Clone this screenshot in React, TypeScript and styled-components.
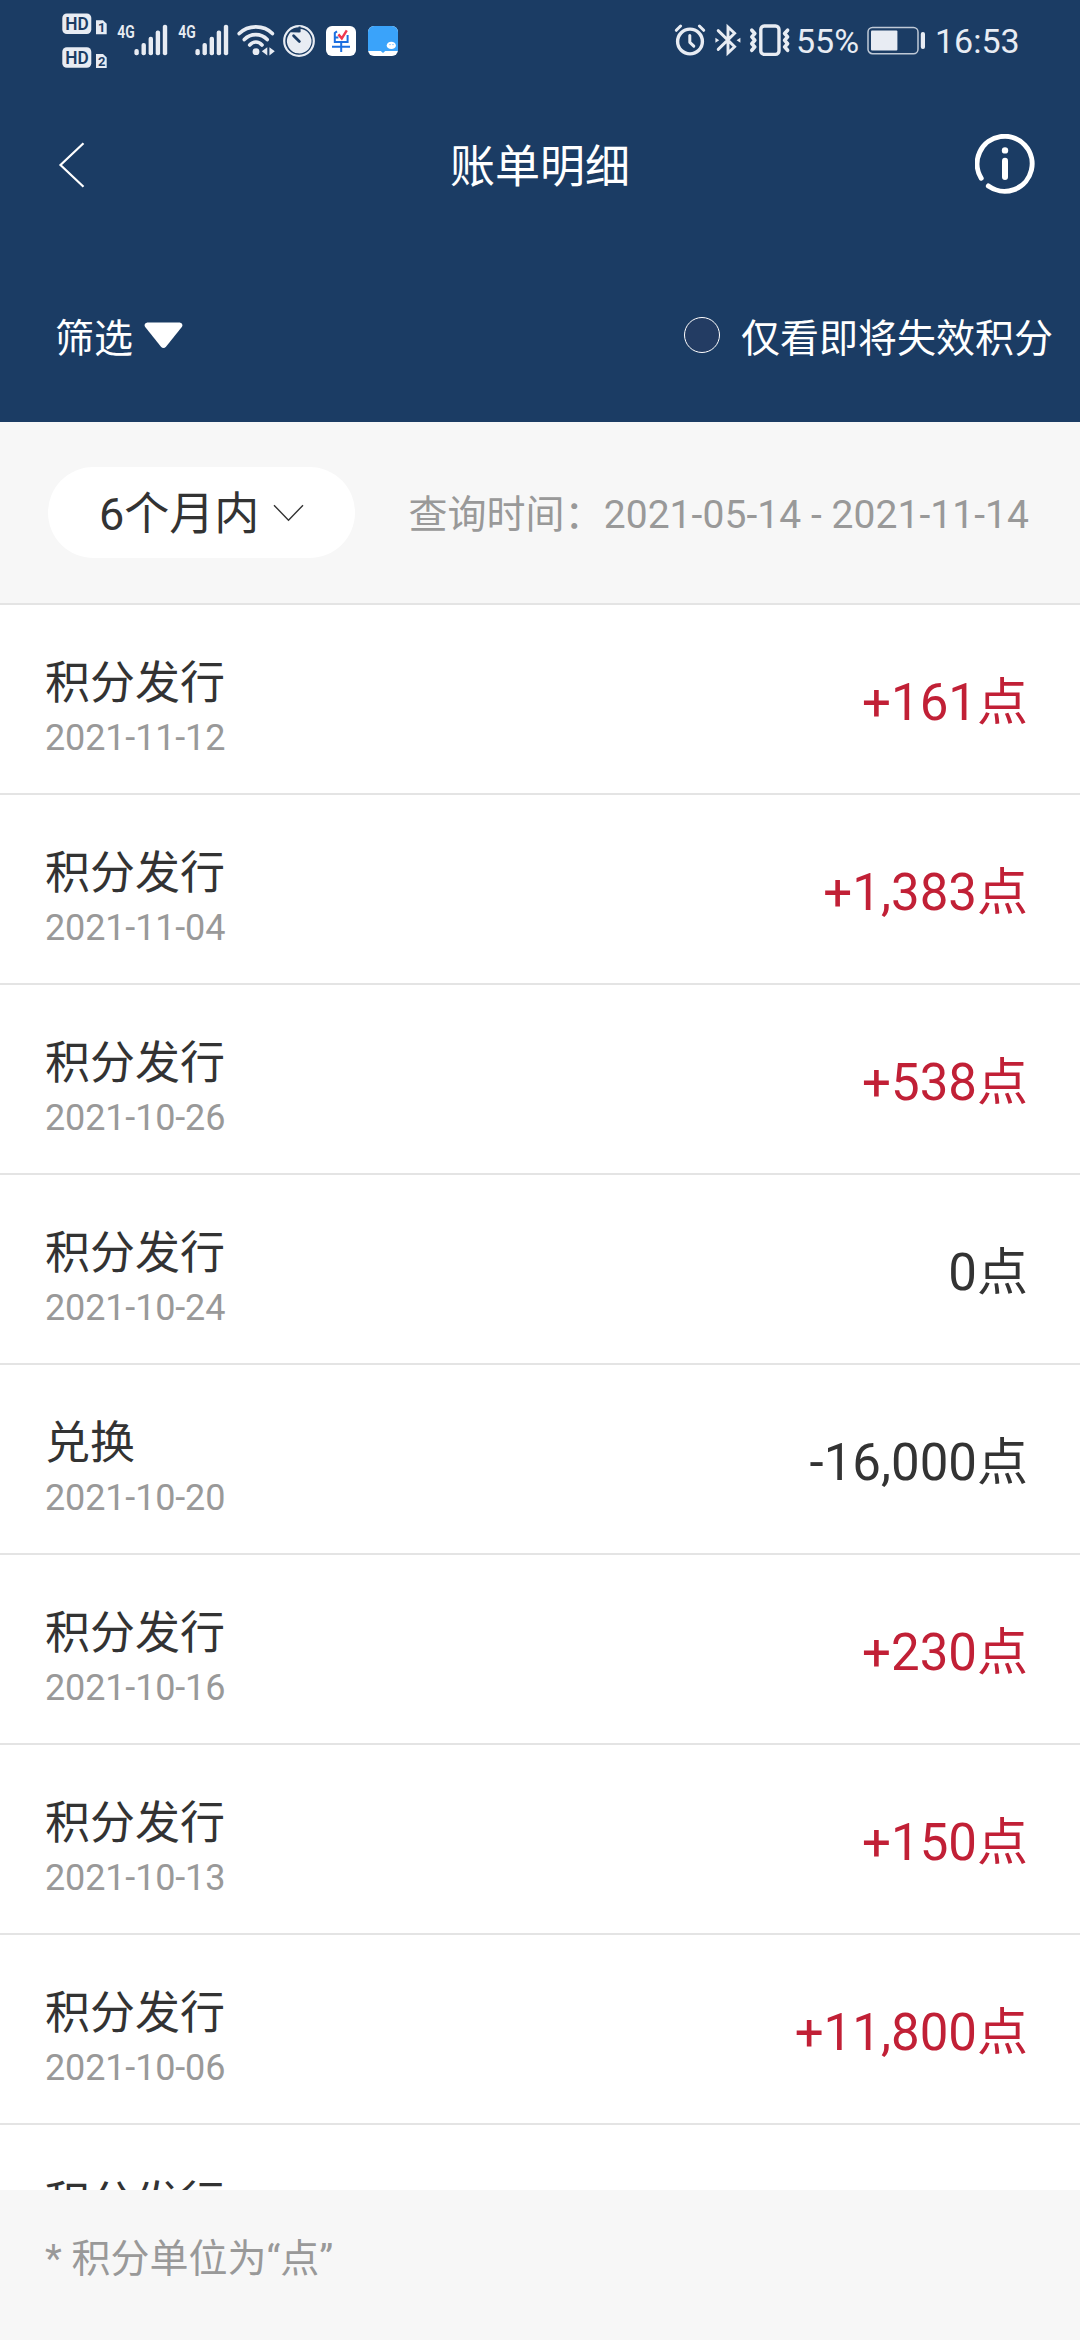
import React from 'react';
import styled, { createGlobalStyle } from 'styled-components';

const NAVY = '#1b3c64';
const STATUS = '#e8ecf3';

const GlobalStyle = createGlobalStyle`
  *, *::before, *::after { box-sizing: border-box; }
  html, body { margin: 0; padding: 0; background: #fff; }
  body { font-family: Roboto, "Noto Sans CJK SC", sans-serif; }
`;

const Screen = styled.div`
  width: 1080px;
  height: 2340px;
  display: flex;
  flex-direction: column;
  overflow: hidden;
  background: #fff;
  color: #333;
`;

const TopArea = styled.header`
  flex: none;
  height: 422px;
  background: ${NAVY};
  color: #fff;
`;

const StatusBar = styled.div`
  height: 82px;
  display: flex;
  justify-content: space-between;
  padding: 0 63px 0 62px;
`;

const StatusGroup = styled.div`
  display: flex;
  align-items: flex-start;
`;

const StatusIcon = styled.svg<{ $gap?: number }>`
  display: block;
  flex: none;
  margin-left: ${(p) => p.$gap ?? 0}px;
`;

const StatusText = styled.span<{ $gap?: number; $width: number }>`
  width: ${(p) => p.$width}px;
  margin-left: ${(p) => p.$gap ?? 0}px;
  font-size: 34px;
  line-height: 82px;
  white-space: nowrap;
  color: ${STATUS};
`;

const NavBar = styled.nav`
  height: 166px;
  display: grid;
  grid-template-columns: 180px 1fr 180px;
  align-items: center;
`;

const BackButton = styled.button`
  border: 0;
  padding: 0 0 0 58px;
  background: none;
  display: flex;
  color: inherit;
`;

const Title = styled.h1`
  margin: 0;
  padding-top: 6px;
  font-size: 45px;
  font-weight: 400;
  line-height: 66px;
  text-align: center;
`;

const InfoButton = styled.button`
  border: 0;
  padding: 0 45px 2px 0;
  background: none;
  display: flex;
  justify-content: flex-end;
  color: inherit;
`;

const FilterRow = styled.div`
  height: 174px;
  display: flex;
  justify-content: space-between;
  align-items: center;
  padding: 7px 27px 0 55px;
  font-size: 39px;
  line-height: 56px;
`;

const FilterToggle = styled.div`
  display: flex;
  align-items: center;
  gap: 11px;
  svg { margin-bottom: 7px; }
`;

const ExpiringOption = styled.label`
  display: flex;
  align-items: center;
  gap: 21px;
`;

const RadioCircle = styled.span`
  width: 36px;
  height: 36px;
  margin-bottom: 7px;
  border: 1.5px solid #fff;
  border-radius: 50%;
  background: #233c63;
`;

const PeriodBar = styled.section`
  flex: none;
  height: 183px;
  display: flex;
  justify-content: space-between;
  align-items: center;
  padding: 0 51px 0 48px;
  border-bottom: 2px solid #e4e4e4;
  background: #f7f7f7;
`;

const PeriodPill = styled.button`
  width: 307px;
  height: 91px;
  border: 0;
  border-radius: 46px;
  padding: 5px 0 0 51px;
  display: flex;
  align-items: center;
  gap: 14px;
  background: #fff;
  color: #333;
  font: inherit;
  font-size: 45px;
  line-height: 66px;
  svg { margin-bottom: 5px; }
`;

const QueryRange = styled.span`
  padding-top: 4px;
  font-size: 39px;
  line-height: 56px;
  letter-spacing: 0.06px;
  color: #999;
  white-space: nowrap;
`;

const RecordList = styled.main`
  flex: 1;
  min-height: 0;
  overflow: hidden;
`;

const Record = styled.div`
  height: 190px;
  display: flex;
  justify-content: space-between;
  align-items: center;
  padding: 8px 52px 0 45px;
  border-bottom: 2px solid #e4e4e4;
`;

const RecordInfo = styled.div`
  display: flex;
  flex-direction: column;
  padding-top: 10px;
`;

const RecordName = styled.span`
  font-size: 45px;
  line-height: 60px;
`;

const RecordDate = styled.span`
  font-size: 36px;
  line-height: 48px;
  letter-spacing: -0.15px;
  color: #999;
`;

const Amount = styled.span<{ $gain: boolean }>`
  font-size: 51px;
  line-height: 74px;
  color: ${(p) => (p.$gain ? '#c12036' : '#333')};
`;

const Footer = styled.footer`
  flex: none;
  height: 150px;
  padding: 41px 45px 0;
  background: #f7f7f7;
  font-size: 39px;
  line-height: 56px;
  color: #999;
`;

const records = [
  { name: '积分发行', date: '2021-11-12', amount: '+161' },
  { name: '积分发行', date: '2021-11-04', amount: '+1,383' },
  { name: '积分发行', date: '2021-10-26', amount: '+538' },
  { name: '积分发行', date: '2021-10-24', amount: '0' },
  { name: '兑换', date: '2021-10-20', amount: '-16,000' },
  { name: '积分发行', date: '2021-10-16', amount: '+230' },
  { name: '积分发行', date: '2021-10-13', amount: '+150' },
  { name: '积分发行', date: '2021-10-06', amount: '+11,800' },
  { name: '积分发行', date: '', amount: '' },
];

const HdIcon = () => (
  <StatusIcon width="46" height="82" viewBox="0 0 46 82">
    {[0, 33.7].map((y, i) => (
      <g key={y} transform={`translate(0 ${y})`}>
        <rect x="0.3" y="13.5" width="29" height="20.6" rx="4.5" fill={STATUS} />
        <text x="3.2" y="30.3" fontFamily="Roboto" fontWeight="600" fontSize="18.5" textLength="23.5" lengthAdjust="spacingAndGlyphs" fill={NAVY}>HD</text>
        <path d="M34 20.3h7l3.7 3.5V34.2H34z" fill={STATUS} />
        <text x="36" y="32.4" fontFamily="Roboto" fontWeight="700" fontSize="13" fill={NAVY}>{i + 1}</text>
      </g>
    ))}
  </StatusIcon>
);

const SignalIcon = ({ gap }: { gap: number }) => (
  <StatusIcon $gap={gap} width="51" height="82" viewBox="0 0 51 82">
    <text x="0.3" y="38.2" fontFamily="Roboto" fontWeight="600" fontSize="18.5" textLength="17.5" lengthAdjust="spacingAndGlyphs" fill={STATUS}>4G</text>
    {[49, 43, 36.7, 30.4, 24.8].map((top, i) => (
      <rect key={top} x={17.4 + i * 7.1} y={top} width="4.4" height={55.3 - top} rx="2" fill={STATUS} />
    ))}
  </StatusIcon>
);

const WifiIcon = () => (
  <StatusIcon $gap={7.5} width="38" height="82" viewBox="0 0 38 82">
    <g fill="none" stroke={STATUS} strokeWidth="3.6" strokeLinecap="round">
      <path d="M2.2 33.6C11 24.6 27 24.6 35.4 33.6" />
      <path d="M7.3 39.6C13.5 33 24 33 30.2 39.6" />
      <path d="M12.7 45C16.3 41 21.5 41 25 45" />
    </g>
    <circle cx="19" cy="51.7" r="3.4" fill={STATUS} />
    <path d="M30.3 47.2v8.2L24.8 51.3zM32.4 47.2v8.2L37.8 51.3z" fill={STATUS} />
  </StatusIcon>
);

const TimerIcon = () => (
  <StatusIcon $gap={7.5} width="34" height="82" viewBox="0 0 34 82">
    <circle cx="17" cy="41" r="14.8" fill="none" stroke={STATUS} strokeWidth="2.2" />
    <path d="M17.6 32.5V28.8A12.3 12.3 0 1 1 8.6 32.3" fill={STATUS} />
    <path d="M17.6 32.2V26.5" stroke={NAVY} strokeWidth="2" />
    <path d="M11.6 35.8l5.8 5.6" stroke={NAVY} strokeWidth="2.8" strokeLinecap="round" />
  </StatusIcon>
);

const OrderAppIcon = () => (
  <StatusIcon $gap={10} width="30" height="82" viewBox="0 0 30 82">
    <rect y="26" width="30" height="30" rx="6" fill="#fff" />
    <g fill="none" stroke="#1b6fe0" strokeWidth="2">
      <path d="M11 31.4L8.8 33v9H21.6V35M8.8 37.4h3.6M6 46.8h18M15.2 42v10" />
    </g>
    <path d="M12.4 34.4l3.4 4 5-8" fill="none" stroke="#f0384f" strokeWidth="2.4" />
  </StatusIcon>
);

const ChatAppIcon = () => (
  <StatusIcon $gap={12} width="30" height="82" viewBox="0 0 30 82">
    <rect y="26" width="30" height="30" rx="6" fill="#fff" />
    <path d="M0 51V32a6 6 0 0 1 6-6h18a6 6 0 0 1 6 6v19H17.2l-2.2 2-2.2-2z" fill="#3aa3fa" />
    <ellipse cx="23.3" cy="45.4" rx="4.6" ry="3.6" fill="#fff" />
    <circle cx="22" cy="44.6" r="0.6" fill="#3aa3fa" />
    <circle cx="25" cy="44.6" r="0.6" fill="#3aa3fa" />
  </StatusIcon>
);

const AlarmIcon = () => (
  <StatusIcon width="32" height="82" viewBox="0 0 32 82">
    <g fill="none" stroke={STATUS} strokeLinecap="round" strokeLinejoin="round">
      <circle cx="16" cy="41.5" r="12.4" strokeWidth="3.4" />
      <path d="M15.8 35.5v6.8l4 3.8" strokeWidth="3" />
      <path d="M2.3 30.3L6.6 26M29.7 30.3L25.4 26" strokeWidth="3" />
    </g>
  </StatusIcon>
);

const BluetoothIcon = () => (
  <StatusIcon $gap={9} width="26" height="82" viewBox="0 0 26 82">
    <path d="M3.2 30.6L19.6 46.8 13 53V27l6.6 6.2L3.2 49.4" fill="none" stroke={STATUS} strokeWidth="2.9" strokeLinecap="round" />
    <path d="M0.4 37.8v5l3.8-2.5zM25.4 37.8v5l-3.8-2.5z" fill={STATUS} />
  </StatusIcon>
);

const VibrateIcon = () => (
  <StatusIcon $gap={8} width="42" height="82" viewBox="0 0 42 82">
    <rect x="11.8" y="26" width="18.2" height="28.4" rx="3.5" fill="none" stroke={STATUS} strokeWidth="3.4" />
    <g fill="none" stroke={STATUS} strokeWidth="3.6" strokeLinejoin="round" strokeLinecap="round">
      <path d="M2.8 30.2l3 3.3-3 3.4 3 3.4-3 3.4 3 3.2-3 3.4" />
      <path d="M38.6 30.2l-3 3.3 3 3.4-3 3.4 3 3.4-3 3.2 3 3.4" />
    </g>
  </StatusIcon>
);

const BatteryIcon = () => (
  <StatusIcon $gap={9} width="59" height="82" viewBox="0 0 59 82">
    <rect x="1" y="27.5" width="50" height="26.2" rx="4.5" fill="none" stroke={STATUS} strokeWidth="1.5" opacity="0.8" />
    <rect x="4" y="30.6" width="26.4" height="20" rx="1" fill={STATUS} />
    <rect x="53.8" y="32" width="4.2" height="17" rx="2" fill={STATUS} />
  </StatusIcon>
);

export default function App() {
  return (
    <>
      <GlobalStyle />
      <Screen>
        <TopArea>
          <StatusBar>
            <StatusGroup>
              <HdIcon />
              <SignalIcon gap={9} />
              <SignalIcon gap={10} />
              <WifiIcon />
              <TimerIcon />
              <OrderAppIcon />
              <ChatAppIcon />
            </StatusGroup>
            <StatusGroup>
              <AlarmIcon />
              <BluetoothIcon />
              <VibrateIcon />
              <StatusText $gap={5} $width={62}>55%</StatusText>
              <BatteryIcon />
              <StatusText $gap={9} $width={82}>16:53</StatusText>
            </StatusGroup>
          </StatusBar>
          <NavBar>
            <BackButton aria-label="返回">
              <svg width="28" height="48" viewBox="0 0 28 48">
                <path d="M25.5 2.2L2.5 24l23 21.8" fill="none" stroke="#fff" strokeWidth="2.2" />
              </svg>
            </BackButton>
            <Title>账单明细</Title>
            <InfoButton aria-label="说明">
              <svg width="60" height="60" viewBox="0 0 60 60">
                <path d="M6.2 44.2A27.5 27.5 0 1 1 13.4 52" fill="none" stroke="#fff" strokeWidth="5" strokeLinecap="round" />
                <circle cx="30" cy="16.4" r="3.2" fill="#fff" />
                <path d="M30 26.7v16.4" stroke="#fff" strokeWidth="6" strokeLinecap="round" />
              </svg>
            </InfoButton>
          </NavBar>
          <FilterRow>
            <FilterToggle>
              筛选
              <svg width="39" height="27" viewBox="0 0 39 27">
                <path d="M3.2 0.5h32.6q4 1 2 4.6L22.2 24.6q-2.7 3-5.4 0L1.2 5.1q-2-3.6 2-4.6z" fill="#fff" />
              </svg>
            </FilterToggle>
            <ExpiringOption>
              <RadioCircle />
              仅看即将失效积分
            </ExpiringOption>
          </FilterRow>
        </TopArea>
        <PeriodBar>
          <PeriodPill>
            6个月内
            <svg width="31" height="18" viewBox="0 0 31 18">
              <path d="M1 1.2l14.5 15L30 1.2" fill="none" stroke="#333" strokeWidth="1.4" />
            </svg>
          </PeriodPill>
          <QueryRange>查询时间：2021-05-14 - 2021-11-14</QueryRange>
        </PeriodBar>
        <RecordList>
          {records.map((r, i) => (
            <Record key={i}>
              <RecordInfo>
                <RecordName>{r.name}</RecordName>
                <RecordDate>{r.date || '\u00a0'}</RecordDate>
              </RecordInfo>
              {r.amount && <Amount $gain={r.amount.startsWith('+')}>{r.amount}点</Amount>}
            </Record>
          ))}
        </RecordList>
        <Footer>* 积分单位为“点”</Footer>
      </Screen>
    </>
  );
}
